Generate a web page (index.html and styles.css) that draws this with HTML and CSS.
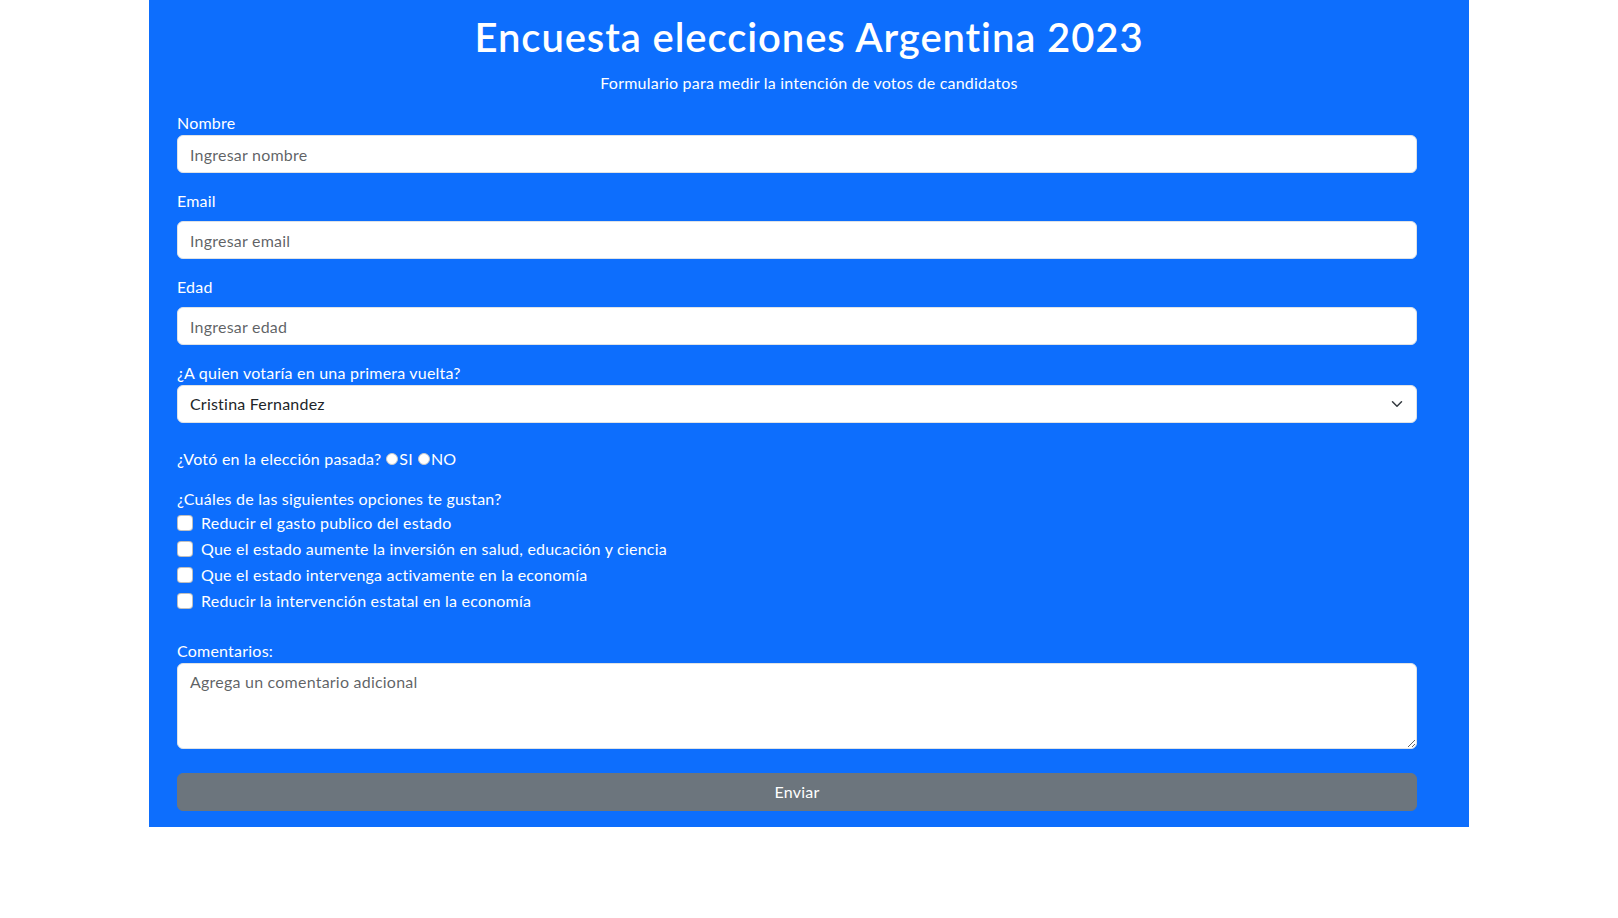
FILE: index.html
```html
<!DOCTYPE html>
<html lang="es">
<head>
<meta charset="utf-8">
<title>Encuesta elecciones Argentina 2023</title>
<link rel="stylesheet" href="styles.css">
</head>
<body>
<main class="container">
  <header class="head">
    <h1 class="title">Encuesta elecciones Argentina 2023</h1>
    <p class="subtitle">Formulario para medir la intención de votos de candidatos</p>
  </header>
  <form class="form">
    <div class="group">
      <label class="label" for="nombre">Nombre</label>
      <input class="control" id="nombre" type="text" placeholder="Ingresar nombre">
    </div>
    <div class="group">
      <label class="label label-gap" for="email">Email</label>
      <input class="control" id="email" type="email" placeholder="Ingresar email">
    </div>
    <div class="group">
      <label class="label label-gap" for="edad">Edad</label>
      <input class="control" id="edad" type="text" placeholder="Ingresar edad">
    </div>
    <div class="group group-lg">
      <label class="label" for="candidato">¿A quien votaría en una primera vuelta?</label>
      <div class="select-wrap">
        <select class="control select" id="candidato">
          <option>Cristina Fernandez</option>
          <option>Javier Milei</option>
          <option>Patricia Bullrich</option>
          <option>Sergio Massa</option>
        </select>
        <svg class="chevron" viewBox="0 0 16 16" width="12" height="12" aria-hidden="true"><path d="m2 5 6 6 6-6" fill="none" stroke="#343a40" stroke-width="2" stroke-linecap="round" stroke-linejoin="round"/></svg>
      </div>
    </div>
    <div class="group radio-line">
      <span class="label">¿Votó en la elección pasada?</span>
      <input class="radio" type="radio" name="voto" id="si"><label for="si" class="label">SI</label>
      <input class="radio" type="radio" name="voto" id="no"><label for="no" class="label">NO</label>
    </div>
    <div class="group group-lg">
      <span class="label">¿Cuáles de las siguientes opciones te gustan?</span>
      <div class="check"><input class="checkbox" type="checkbox" id="c1"><label for="c1">Reducir el gasto publico del estado</label></div>
      <div class="check"><input class="checkbox" type="checkbox" id="c2"><label for="c2">Que el estado aumente la inversión en salud, educación y ciencia</label></div>
      <div class="check"><input class="checkbox" type="checkbox" id="c3"><label for="c3">Que el estado intervenga activamente en la economía</label></div>
      <div class="check"><input class="checkbox" type="checkbox" id="c4"><label for="c4">Reducir la intervención estatal en la economía</label></div>
    </div>
    <div class="group group-lg">
      <label class="label" for="comentarios">Comentarios:</label>
      <textarea class="control textarea" id="comentarios" rows="3" placeholder="Agrega un comentario adicional"></textarea>
    </div>
    <button class="btn" type="submit">Enviar</button>
  </form>
</main>
</body>
</html>
```

FILE: styles.css
```css
* { box-sizing: border-box; }

html, body {
  margin: 0;
  padding: 0;
  background: #ffffff;
}

body {
  font-family: "Lato", "Noto Sans", sans-serif;
  font-size: 16px;
  line-height: 24px;
  letter-spacing: 0.22px;
  color: #212529;
}

.container {
  width: 1320px;
  margin: 0 auto;
  background: #0d6efd;
  padding: 13px 52px 16px 28px;
  color: #ffffff;
}

.head {
  text-align: center;
  margin-left: -28px;
  margin-right: -52px;
}

.title {
  margin: 0 0 10px;
  font-size: 40px;
  line-height: 48px;
  font-weight: 600;
  letter-spacing: 0.9px;
}

.subtitle {
  margin: 0 0 16px;
  font-size: 16px;
  line-height: 24px;
}

.form {
  display: flex;
  flex-direction: column;
}

.group {
  display: flex;
  flex-direction: column;
  margin-bottom: 16px;
}

.group-lg {
  margin-bottom: 24px;
}

.label {
  display: block;
  color: #ffffff;
  line-height: 24px;
}

.label-gap {
  margin-bottom: 8px;
}

.control {
  display: block;
  width: 100%;
  height: 38px;
  padding: 6px 12px;
  font-family: inherit;
  font-size: 16px;
  line-height: 24px;
  letter-spacing: 0.22px;
  color: #212529;
  background: #ffffff;
  border: 1px solid #dee2e6;
  border-radius: 6px;
  outline: none;
}

.control::placeholder {
  color: rgba(33, 37, 41, 0.72);
  opacity: 1;
}

.select-wrap {
  position: relative;
}

.select {
  appearance: none;
  -webkit-appearance: none;
  padding-right: 36px;
}

.chevron {
  position: absolute;
  right: 14px;
  top: 13px;
  pointer-events: none;
}

.radio-line {
  flex-direction: row;
  align-items: center;
}

.radio {
  appearance: none;
  -webkit-appearance: none;
  width: 12px;
  height: 12px;
  margin: 0 1px 0 5px;
  border: 1px solid #c8c8c8;
  border-radius: 50%;
  background: #ffffff;
}

.check {
  display: flex;
  align-items: flex-start;
  min-height: 24px;
  margin-bottom: 2px;
  color: #ffffff;
}

.checkbox {
  appearance: none;
  -webkit-appearance: none;
  flex: none;
  width: 16px;
  height: 16px;
  margin: 4px 8px 0 0;
  background: #ffffff;
  border: 1px solid rgba(0, 0, 0, 0.25);
  border-radius: 4px;
}

.textarea {
  height: 86px;
  resize: vertical;
}

.btn {
  display: block;
  width: 100%;
  height: 38px;
  padding: 6px 12px;
  font-family: inherit;
  font-size: 16px;
  line-height: 24px;
  letter-spacing: 0.22px;
  color: #ffffff;
  background: #6c757d;
  border: 1px solid #6c757d;
  border-radius: 6px;
  text-align: center;
}
```
